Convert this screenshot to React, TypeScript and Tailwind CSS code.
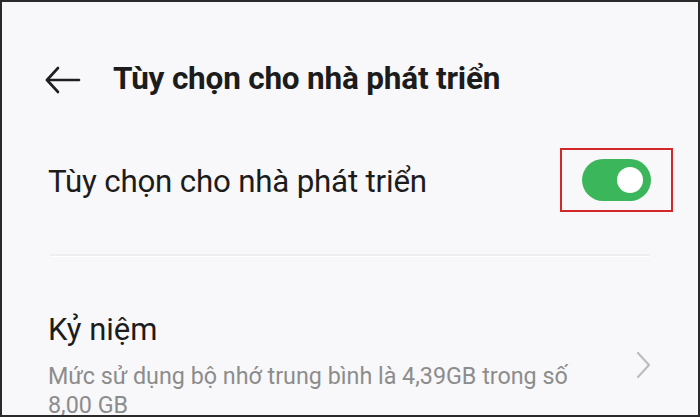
import React from 'react';

function BackArrow() {
    return (
        <svg width="36" height="28" viewBox="0 0 36 28" fill="none" stroke="#1f1f1f" strokeWidth="2.6" strokeLinecap="round" strokeLinejoin="round">
            <path d="M2 14H34" />
            <path d="M13 2L2 14L13 26" />
        </svg>
    );
}

function Chevron() {
    return (
        <svg width="18" height="28" viewBox="0 0 18 28" fill="none" stroke="#bdbdbd" strokeWidth="2.2" strokeLinecap="round" strokeLinejoin="round">
            <path d="M4 2L15 14L4 26" />
        </svg>
    );
}

export default function App() {
    return (
        <div className="w-[700px] h-[417px] overflow-hidden bg-[#2a2a2a] pt-[2px] px-[2px] pb-[2px] font-['Roboto',sans-serif]">
            <div className="h-full bg-[#f8f8fa] flex flex-col overflow-hidden">
                {/* header */}
                <div className="h-[152px] shrink-0 flex items-start pt-[64px] pl-[43px]">
                    <BackArrow />
                    <h1 className="ml-[32px] -mt-[6px] text-[31.5px] leading-[38px] font-bold text-[#1c1c1c] tracking-[-0.2px]">
                        Tùy chọn cho nhà phát triển
                    </h1>
                </div>

                {/* developer options toggle */}
                <div className="flex shrink-0 items-center h-[64px] -mt-[6px] pl-[46px] pr-[25px]">
                    <span className="flex-1 pt-[4px] text-[31.3px] text-[#1c1c1c] tracking-[-0.2px]">Tùy chọn cho nhà phát triển</span>
                    <div className="w-[113px] h-[64px] border-2 border-[#d3272a] flex items-center justify-center">
                        <div className="w-[69px] h-[42px] rounded-full bg-[#3cb65b] flex items-center justify-end pr-[8px]">
                            <div className="w-[26px] h-[26px] rounded-full bg-white" />
                        </div>
                    </div>
                </div>

                <div className="shrink-0 mt-[42px] mx-[48px] h-[3px] bg-[#eeeeef] border-b border-white" />

                {/* memory */}
                <div className="flex shrink-0 items-center pl-[46px] pr-[46px] pt-[54px]">
                    <div className="flex-1">
                        <div className="text-[31px] leading-[38px] text-[#1c1c1c]">Kỷ niệm</div>
                        <div className="mt-[13px] text-[23.3px] leading-[29px] text-[#8c8c8c] w-[548px]">
                            Mức sử dụng bộ nhớ trung bình là 4,39GB trong số 8,00 GB
                        </div>
                    </div>
                    <div className="-mt-[2px]">
                        <Chevron />
                    </div>
                </div>
            </div>
        </div>
    );
}
